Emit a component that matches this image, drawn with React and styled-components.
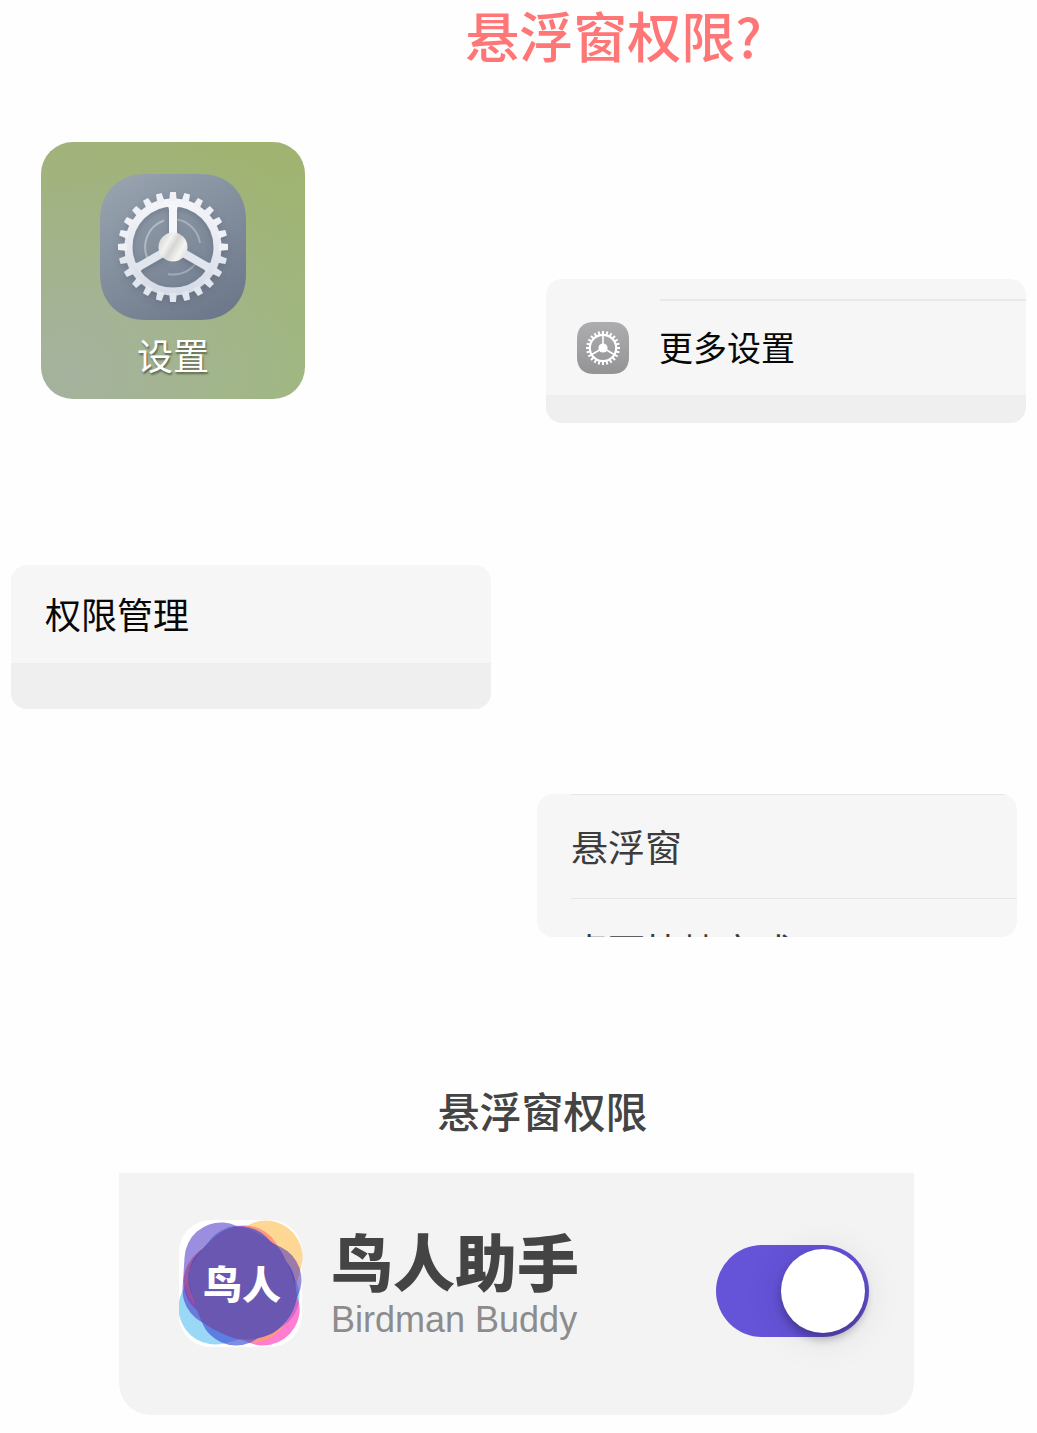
import React from "react";
import styled, { createGlobalStyle } from "styled-components";

const Global = createGlobalStyle`
  * { box-sizing: border-box; }
  body { margin: 0; background: #fefefe; font-family: "Noto Sans CJK SC", "Liberation Sans", sans-serif; }
  h1, h2, h3, p { margin: 0; }
  a { color: inherit; text-decoration: none; }
`;

const Page = styled.main`
  display: flex;
  flex-direction: column;
  padding-bottom: 18px;
`;

const Title = styled.h1`
  padding-left: 190px;
  text-align: center;
  font-size: 54px;
  line-height: 70px;
  font-weight: 500;
  color: #ff7676;
`;

const Step = styled.section`
  display: flex;
  justify-content: ${(p) => p.$justify || "flex-start"};
  align-items: flex-end;
  gap: 24px;
  margin-top: ${(p) => p.$top}px;
  padding: 0 ${(p) => p.$right || 0}px 0 ${(p) => p.$left || 0}px;
`;

const Tile = styled.a`
  display: flex;
  flex-direction: column;
  align-items: center;
  align-self: flex-start;
  gap: 10px;
  width: 264px;
  margin-bottom: 24px;
  padding: 32px 0 20px;
  border-radius: 32px;
  background:
    radial-gradient(circle at 10% 90%, rgba(165, 178, 158, 1), rgba(165, 178, 140, 0) 85%),
    linear-gradient(170deg, #a0b370 15%, #9fb87c 85%);
  color: #fff;
  font-size: 36px;
  line-height: 49px;
  text-shadow: 1px 2px 2px rgba(60, 70, 50, 0.7);
`;

const Card = styled.div`
  flex: 0 1 480px;
  height: ${(p) => p.$height || 144}px;
  overflow: hidden;
  border-radius: 16px;
  background: #f6f6f6;
`;

const Row = styled.a`
  display: flex;
  align-items: center;
  gap: 30px;
  height: ${(p) => p.$height}px;
  margin-left: ${(p) => p.$inset}px;
  border-top: ${(p) => (p.$ruled ? "1px solid #e6e6e6" : "0")};
  font-size: ${(p) => p.$size || 36}px;
  line-height: 48px;
  color: ${(p) => p.$color || "#080808"};
`;

const RowLabel = styled.span`
  padding-bottom: 2px;
`;

const Rule = styled.div`
  height: 2px;
  margin: 20px 0 0 114px;
  background: #e9e9e9;
`;

const Band = styled.div`
  height: 46px;
  background: #efefef;
`;

const Permission = styled.section`
  margin-top: 148px;
  padding: 0 123px 0 119px;
`;

const SectionTitle = styled.h2`
  padding-left: 52px;
  text-align: center;
  font-size: 42px;
  line-height: 50px;
  font-weight: 500;
  color: #444;
`;

const Panel = styled.div`
  display: flex;
  align-items: flex-start;
  margin-top: 38px;
  padding: 47px 45px 68px 60px;
  border-radius: 0 0 32px 32px;
  background: #f3f3f3;
`;

const Names = styled.label`
  flex: 1;
  margin: 4px 0 0 28px;
`;

const AppName = styled.strong`
  display: block;
  font-size: 62px;
  line-height: 72px;
  font-weight: 900;
  color: #444;
`;

const AppSubtitle = styled.span`
  display: block;
  font-family: "Liberation Sans", sans-serif;
  font-size: 36px;
  line-height: 48px;
  color: #8c8c8c;
`;

const Switch = styled.input`
  appearance: none;
  flex: none;
  width: 153px;
  height: 92px;
  margin: 25px 0 0;
  padding: 4px;
  display: flex;
  justify-content: flex-start;
  border-radius: 46px;
  background: #c9c9ce;
  cursor: pointer;

  &::before {
    content: "";
    width: 84px;
    height: 84px;
    border-radius: 50%;
    background: #fff;
    box-shadow: 0 6px 10px rgba(0, 0, 0, 0.28), 0 4px 40px rgba(0, 0, 0, 0.1);
  }
  &:checked {
    justify-content: flex-end;
    background: #6553d8;
  }
`;

const teeth = Array.from({ length: 24 }, (_, i) => i * 15);
const spokes = [0, 120, 240];

function GearIcon({ size }) {
  return (
    <svg width={size} height={size} viewBox="0 0 146 146" aria-hidden="true">
      <defs>
        <linearGradient id="slate" x1="0.2" y1="0" x2="0.8" y2="1">
          <stop offset="0" stopColor="#97a2ae" />
          <stop offset="1" stopColor="#6c788a" />
        </linearGradient>
        <linearGradient id="silver" gradientUnits="userSpaceOnUse" x1="73" y1="18" x2="73" y2="128">
          <stop offset="0" stopColor="#f7f8fb" />
          <stop offset="1" stopColor="#d3d9e5" />
        </linearGradient>
        <linearGradient id="hub" x1="0" y1="0.2" x2="1" y2="0.8">
          <stop offset="0" stopColor="#d2d2d0" />
          <stop offset="0.3" stopColor="#f2f2f0" />
          <stop offset="0.5" stopColor="#d6d6d3" />
          <stop offset="0.75" stopColor="#f4f4f2" />
          <stop offset="1" stopColor="#dddddb" />
        </linearGradient>
        <filter id="soft" x="-20%" y="-20%" width="140%" height="140%">
          <feDropShadow dx="0" dy="3" stdDeviation="3" floodColor="#3f4a5a" floodOpacity="0.3" />
        </filter>
      </defs>
      <path d="M46 0H100C128 0 146 18 146 46V100C146 128 128 146 100 146H46C18 146 0 128 0 100V46C0 18 18 0 46 0Z" fill="url(#slate)" />
      <g fill="none" stroke="#d9dfe7" strokeWidth="2">
        <path d="M49 87A28 28 0 0 1 64 46.500" opacity="0.5" />
        <path d="M77 45.500A28 28 0 0 1 100 69" opacity="0.4" />
        <path d="M98 86A28 28 0 0 1 68 100" opacity="0.4" />
      </g>
      <g filter="url(#soft)">
        <circle cx="73" cy="73" r="44.500" fill="none" stroke="url(#silver)" strokeWidth="8" />
        {teeth.map((a) => (
          <path key={a} d="M69.300 27L70.100 18H75.900L76.700 27Z" fill={a > 90 && a < 270 ? "#e1e6ef" : "#eff1f6"} transform={`rotate(${a} 73 73)`} />
        ))}
        {spokes.map((a) => (
          <path key={a} d="M66 31Q69 32 69 36V64H77V36Q77 32 80 31Z" fill={a ? "#e0e5ee" : "#f5f6fa"} transform={`rotate(${a} 73 73)`} />
        ))}
      </g>
      <circle cx="73" cy="73" r="14.500" fill="url(#hub)" />
    </svg>
  );
}

function SmallGearIcon() {
  return (
    <svg width="52" height="52" viewBox="0 0 52 52" aria-hidden="true">
      <defs>
        <linearGradient id="grey" x1="0" y1="0" x2="0" y2="1">
          <stop offset="0" stopColor="#adadaf" />
          <stop offset="1" stopColor="#949497" />
        </linearGradient>
      </defs>
      <path d="M17 0H35C46 0 52 6 52 17V35C52 46 46 52 35 52H17C6 52 0 46 0 35V17C0 6 6 0 17 0Z" fill="url(#grey)" />
      <circle cx="26" cy="26" r="13.200" fill="none" stroke="#fff" strokeWidth="2.200" />
      {teeth.map((a) => (
        <path key={a} d="M25 12.500V9H27V12.500Z" fill="#fff" transform={`rotate(${a} 26 26)`} />
      ))}
      {spokes.map((a) => (
        <path key={a} d="M25.200 13H26.800V26H25.200Z" fill="#fff" transform={`rotate(${a} 26 26)`} />
      ))}
      <circle cx="26" cy="26" r="4.600" fill="#fff" />
    </svg>
  );
}

const petals = [
  { color: "#38b4ec", points: "36,88 60,42 84,76", opacity: 0.5 },
  { color: "#ff0aa8", points: "84,89 66,42 41,62", opacity: 0.52 },
  { color: "#ffb02e", points: "87,37 42,60 74,86", opacity: 0.5 },
  { color: "#3c4fd8", points: "57,89 46,58 62,43 80,66", opacity: 0.65 },
  { color: "#3a20c0", points: "42,39 86,60 78,76 40,70", opacity: 0.5 },
];

function BirdmanIcon() {
  return (
    <svg width="124" height="127" viewBox="0 0 124 127" role="img" aria-label="鸟人">
      <rect width="123" height="127" rx="32" fill="#fff" />
      {petals.map((p) => (
        <g key={p.color} opacity={p.opacity}>
          <polygon points={p.points} fill={p.color} stroke={p.color} strokeWidth="73" strokeLinejoin="round" />
        </g>
      ))}
      <path d="M60 7C72 8 89 18 100 28C106 36 117 62 118 75C117 90 108 104 94 113C80 120 62 122 49 116C40 112 28 107 22 100C16 86 11 68 9 54C12 43 24 27 33 19C40 12 50 7 60 7Z" fill="#6a57b2" />
      <text x="63" y="79" textAnchor="middle" fontFamily="'Noto Sans CJK SC', sans-serif" fontWeight="900" fontSize="39" fill="#fff">鸟人</text>
    </svg>
  );
}

export default function App() {
  return (
    <>
      <Global />
      <Page>
        <Title>悬浮窗权限?</Title>

        <Step $top={72} $left={41} $right={11} $justify="space-between">
          <Tile href="#settings">
            <GearIcon size={146} />
            设置
          </Tile>
          <Card>
            <Rule />
            <Row href="#more" $inset={31} $height={94} $size={34}>
              <SmallGearIcon />
              <RowLabel>更多设置</RowLabel>
            </Row>
            <Band />
          </Card>
        </Step>

        <Step $top={142} $left={11}>
          <Card>
            <Row href="#permissions" $inset={34} $height={98}>
              <RowLabel>权限管理</RowLabel>
            </Row>
            <Band />
          </Card>
        </Step>

        <Step $top={85} $right={20} $justify="flex-end">
          <Card $height={143}>
            <Row href="#floating" $inset={34} $height={104} $size={37} $color="#3c3c3c" $ruled>
              <RowLabel>悬浮窗</RowLabel>
            </Row>
            <Row href="#shortcut" $inset={34} $height={104} $size={37} $color="#3c3c3c" $ruled>
              <RowLabel>桌面快捷方式</RowLabel>
            </Row>
          </Card>
        </Step>

        <Permission>
          <SectionTitle>悬浮窗权限</SectionTitle>
          <Panel>
            <BirdmanIcon />
            <Names htmlFor="floating-switch">
              <AppName>鸟人助手</AppName>
              <AppSubtitle>Birdman Buddy</AppSubtitle>
            </Names>
            <Switch id="floating-switch" type="checkbox" role="switch" defaultChecked />
          </Panel>
        </Permission>
      </Page>
    </>
  );
}
